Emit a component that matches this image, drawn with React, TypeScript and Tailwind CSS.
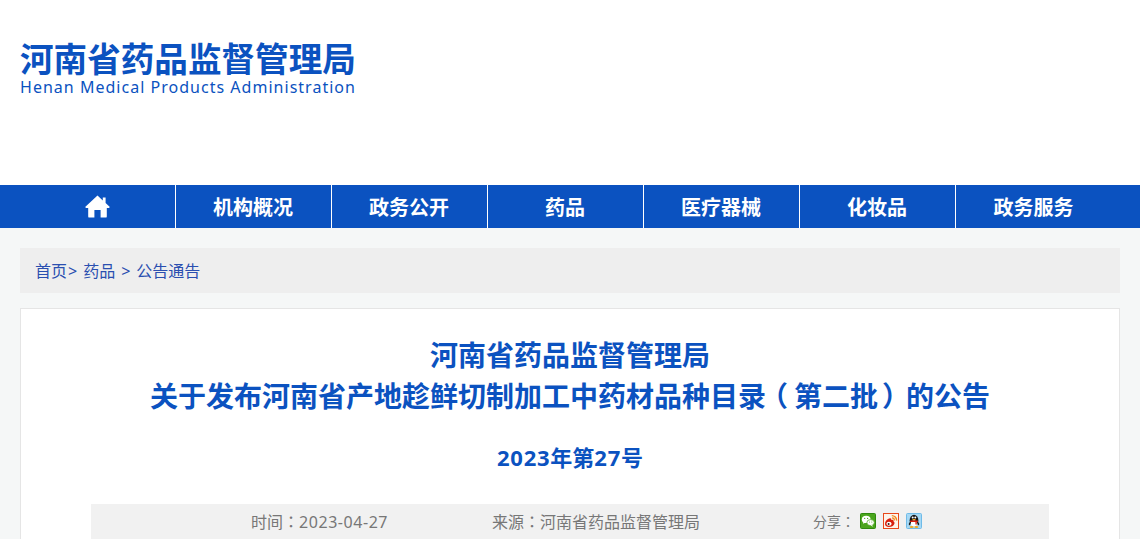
const cjk = 'font-["Noto_Sans","Noto_Sans_CJK_SC",sans-serif]';
const colon = 'font-["Noto_Sans_CJK_TC",sans-serif]';

const navItems = ['机构概况', '政务公开', '药品', '医疗器械', '化妆品', '政务服务'];

function HomeIcon() {
  return (
    <svg width="25" height="23" viewBox="0 0 25 23" className="block">
      <path
        d="M12.5 0.5 L17.8 5.4 V2.6 H20.6 V8 L24.6 11.8 Q25 12.9 23.8 12.9 H21.8 V21.4 Q21.8 22.6 20.6 22.6 H15.6 V15 H9.4 V22.6 H4.4 Q3.2 22.6 3.2 21.4 V12.9 H1.2 Q0 12.9 0.4 11.8 Z"
        fill="#fff"
      />
    </svg>
  );
}

function WechatIcon() {
  return (
    <svg width="16" height="16" viewBox="0 0 16 16" className="block">
      <rect x="0.5" y="0.5" width="15" height="15" rx="1" fill="#4aa51c" stroke="#2f8a0e" />
      <ellipse cx="6.2" cy="6.4" rx="4.4" ry="3.6" fill="#fff" />
      <path d="M3.6 8.8 L3 10.8 L5.6 9.6 Z" fill="#fff" />
      <circle cx="4.7" cy="5.4" r="0.6" fill="#4aa51c" />
      <circle cx="7.6" cy="5.4" r="0.6" fill="#4aa51c" />
      <ellipse cx="10.6" cy="9.6" rx="3.7" ry="3" fill="#fff" stroke="#4aa51c" strokeWidth="0.7" />
      <path d="M12 12 L13 13.8 L10.6 12.4 Z" fill="#fff" />
      <circle cx="9.4" cy="9" r="0.5" fill="#4aa51c" />
      <circle cx="11.8" cy="9" r="0.5" fill="#4aa51c" />
    </svg>
  );
}

function WeiboIcon() {
  return (
    <svg width="16" height="16" viewBox="0 0 16 16" className="block">
      <rect x="0.5" y="0.5" width="15" height="15" fill="#fdf3ea" stroke="#e8481a" />
      <path d="M2 11 Q2 7.5 6 5.6 Q8.6 4.6 8.4 7 Q11 6.4 10.6 8.4 Q12 9 11.4 10.8 Q10 14 6 14 Q2 13.6 2 11 Z" fill="#d8200f" />
      <ellipse cx="6" cy="10.8" rx="2.6" ry="2" fill="#fff" />
      <circle cx="5.6" cy="11" r="1" fill="#222" />
      <path d="M8.8 2.6 A4.8 4.8 0 0 1 13.6 7.6" fill="none" stroke="#f08a1d" strokeWidth="1.4" />
      <path d="M9 4.9 A2.5 2.5 0 0 1 11.4 7.4" fill="none" stroke="#f08a1d" strokeWidth="1.2" />
    </svg>
  );
}

function QQIcon() {
  return (
    <svg width="16" height="16" viewBox="0 0 16 16" className="block">
      <rect x="0.5" y="0.5" width="15" height="15" rx="1" fill="#a5d8f5" stroke="#6fbbe8" />
      <ellipse cx="8" cy="7.4" rx="4.4" ry="5.6" fill="#161616" />
      <path d="M3.8 9 Q2.2 11 3 12.4 L4.8 11 Z" fill="#161616" />
      <path d="M12.2 9 Q13.8 11 13 12.4 L11.2 11 Z" fill="#161616" />
      <ellipse cx="8" cy="10.4" rx="3.2" ry="3" fill="#fff" />
      <circle cx="6.7" cy="4.6" r="1" fill="#fff" />
      <circle cx="9.3" cy="4.6" r="1" fill="#fff" />
      <path d="M5.8 6 H10.2 L8 7.4 Z" fill="#f2a81d" />
      <path d="M4.2 7.6 H11.8 V9 H10.8 V11.4 H9.4 V9 H4.2 Z" fill="#d8200f" />
      <ellipse cx="5.6" cy="14" rx="2" ry="0.9" fill="#f2a81d" />
      <ellipse cx="10.4" cy="14" rx="2" ry="0.9" fill="#f2a81d" />
    </svg>
  );
}

export default function App() {
  return (
    <div className={`h-[539px] overflow-hidden bg-[#f5f7f7] ${cjk}`}>
      <header className="h-[185px] bg-white pl-5 pt-[38px]">
        <div className="w-[336px] text-[#0b52c0]">
          <div className="text-[33.6px] font-bold leading-[42px] whitespace-nowrap">河南省药品监督管理局</div>
          <div className="text-[16px] leading-[15px] tracking-[1.02px] whitespace-nowrap">Henan Medical Products Administration</div>
        </div>
      </header>

      <nav className="flex h-[43px] bg-[#0b52c0] pl-5 text-white">
        <a className="flex w-[156px] items-center justify-center border-r border-white pr-[1px]">
          <HomeIcon />
        </a>
        {navItems.map((item, i) => (
          <a
            key={item}
            className={`flex w-[156px] items-center justify-center pr-[1px] pt-[3px] text-[20px] font-bold ${i < navItems.length - 1 ? 'border-r border-white' : ''}`}
          >
            {item}
          </a>
        ))}
      </nav>

      <div className="mx-5 mt-5 flex h-[45px] items-center bg-[#eeeeee] pl-[15px] pt-[1px] text-[16px] text-[#2a4fb0]">
        <span>首页</span>
        <span className="ml-[1px]">&gt;</span>
        <span className="ml-[6px]">药品</span>
        <span className="ml-[6px]">&gt;</span>
        <span className="ml-[6px]">公告通告</span>
      </div>

      <main className="mx-5 mt-[15px] h-[300px] border border-[#e5e5e5] bg-white pt-[26px]">
        <h1 className="text-center text-[28px] font-bold leading-[41px] text-[#0b52c0]">
          河南省药品监督管理局
          <br />
          关于发布河南省产地趁鲜切制加工中药材品种目录
          <span className="ml-[8px] mr-[6px] inline-block [font-feature-settings:'halt']">（</span>
          第二批
          <span className="ml-[4px] mr-[10px] inline-block [font-feature-settings:'halt']">）</span>
          的公告
        </h1>
        <div className="mt-[19px] text-center text-[22px] font-bold leading-[42px] text-[#0b52c0]">
          <span className="tracking-[0.75px]">2023</span>年第<span className="tracking-[0.75px]">27</span>号
        </div>
        <div className="mx-[70px] mt-[26px] flex h-[36px] items-center bg-[#f1f1f1] pb-[2px] text-[16px] text-[#777777]">
          <span className="ml-[160px] w-[241px]">
            时间<span className={colon}>：</span>
            <span className="tracking-[0.55px]">2023-04-27</span>
          </span>
          <span className="w-[321px]">
            来源<span className={colon}>：</span>河南省药品监督管理局
          </span>
          <span className="text-[14px]">
            分享<span className={colon}>：</span>
          </span>
          <span className="ml-[5px] flex gap-[7px]">
            <WechatIcon />
            <WeiboIcon />
            <QQIcon />
          </span>
        </div>
      </main>
    </div>
  );
}
